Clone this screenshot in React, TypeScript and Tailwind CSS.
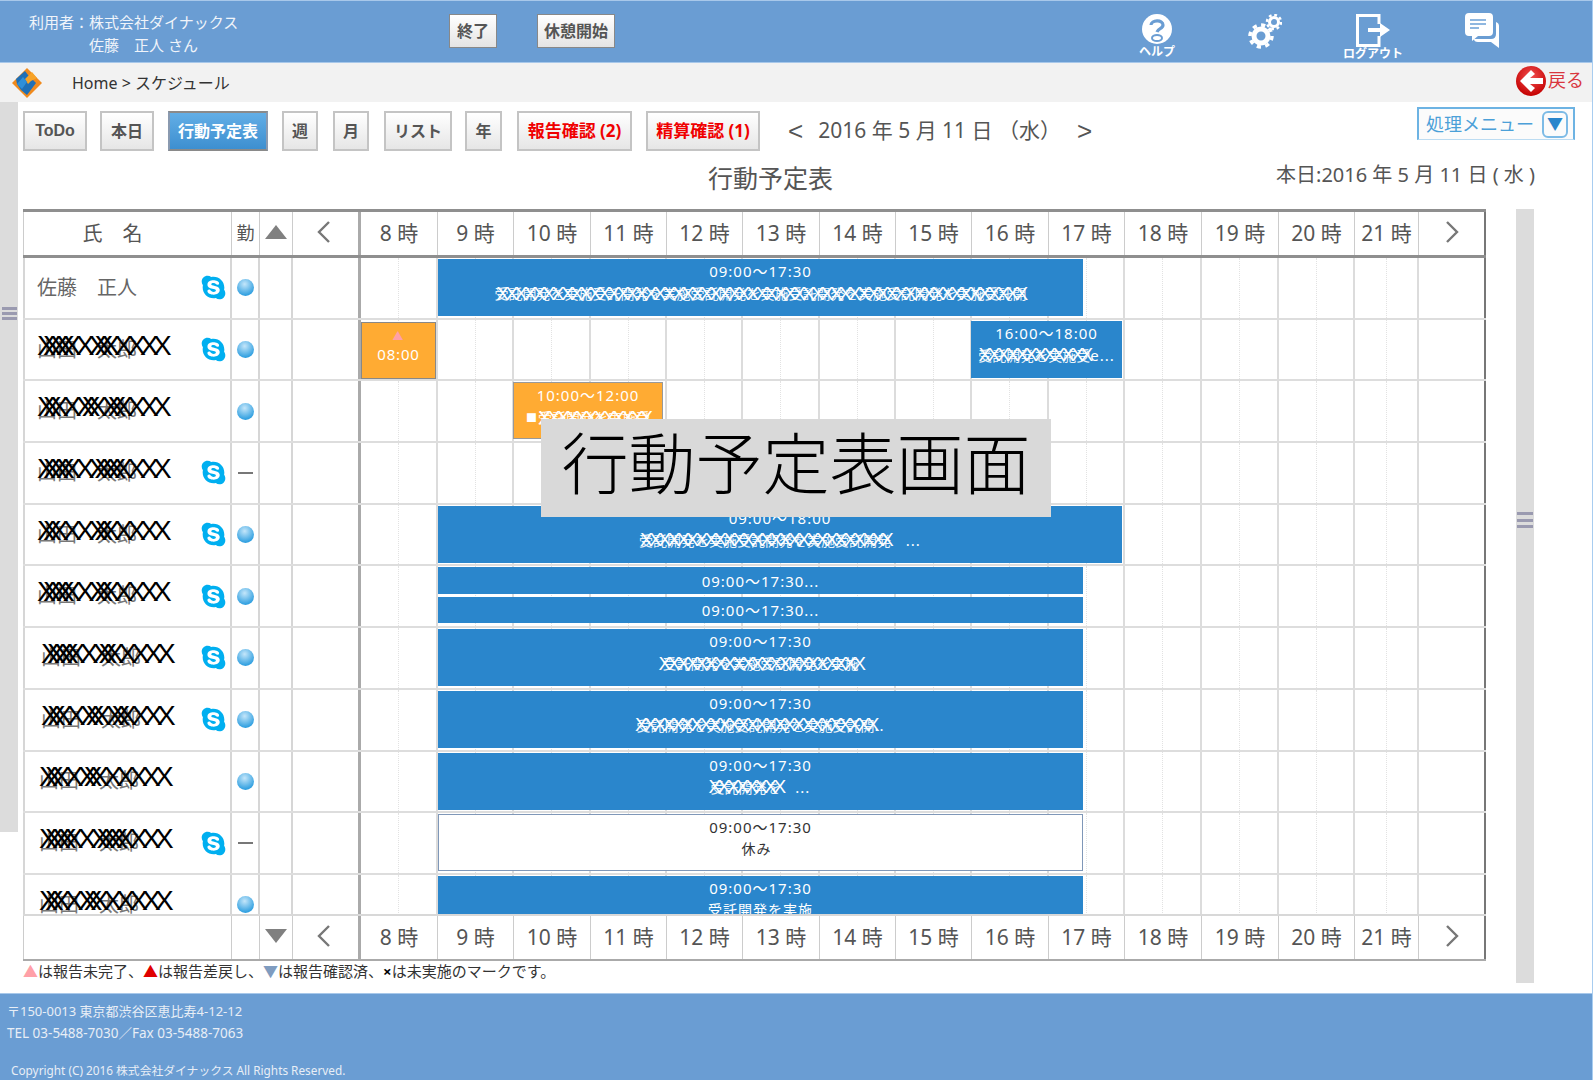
import type { ReactNode } from "react"
import { FaSkype } from "react-icons/fa"

const COLS =
  "grid grid-cols-[209px_28px_33px_68px_77px_76px_77px_76px_76px_77px_76px_76px_77px_76px_77px_77px_76px_64px_67px]"

const hours = [8, 9, 10, 11, 12, 13, 14, 15, 16, 17, 18, 19, 20, 21]

function Chevron({ left }: { left?: boolean }) {
  return (
    <svg width="18" height="24" viewBox="0 0 18 24" fill="none" stroke="#777" strokeWidth="2.4">
      <polyline points={left ? "14,2 4,12 14,22" : "4,2 14,12 4,22"} />
    </svg>
  )
}

function Tri({ down }: { down?: boolean }) {
  return (
    <svg width="24" height="14" viewBox="0 0 24 14" fill="#808080">
      <polygon points={down ? "1,0 23,0 12,14" : "12,0 23,14 1,14"} />
    </svg>
  )
}

function HeadRow({ bottom }: { bottom?: boolean }) {
  return (
    <div className={COLS + (bottom ? " h-[47px] border-b-2 border-t-2 border-t-[#d8d8d8] border-b-[#aaaaaa]" : " h-[49px] border-t-[3px] border-b-[3px] border-[#8f8f8f]")}>
      <div className="flex items-center justify-center border-x border-[#cccccc] pr-[30px] text-[20px] text-[#555]">
        {bottom ? "" : "氏　名"}
      </div>
      <div className="flex items-center justify-center border-r border-[#cccccc] text-[18px] text-[#555]">
        {bottom ? "" : "勤"}
      </div>
      <div className="flex items-center justify-center border-r border-[#cccccc] pb-1">
        <Tri down={bottom} />
      </div>
      <div className="flex items-center justify-center border-r-[3px] border-[#aaaaaa] pb-1 pr-1">
        <Chevron left />
      </div>
      {hours.map((h) => (
        <div
          key={h}
          className="flex items-center justify-center whitespace-nowrap border-r border-[#cccccc] text-[21px] text-[#555]"
        >
          {h} 時
        </div>
      ))}
      <div className="flex items-center justify-center border-r-2 border-[#777] pb-1">
        <Chevron />
      </div>
    </div>
  )
}

function MaskedName({ pad, extra }: { pad: string; extra: string }) {
  return (
    <div className={pad}>
      <div className="relative text-[20px] leading-none text-[#777]">
        <span>山田　太郎</span>
        <span className="absolute -top-[12px] left-0 whitespace-pre text-[28px] leading-[36px] tracking-[-5.8px] text-black [font-family:'Liberation_Sans']">
          XXXXXXXXXX
        </span>
        <span className="absolute -top-[12px] left-[6px] whitespace-pre text-[28px] leading-[36px] tracking-[-5.8px] text-black [font-family:'Liberation_Sans']">
          {extra.split("").map((c, i) => (
            <span key={i} className={c === "_" ? "invisible" : ""}>
              X
            </span>
          ))}
        </span>
      </div>
    </div>
  )
}

function Masked({ n, len, tail }: { n: number; len: number; tail?: string }) {
  return (
    <div className="flex items-center whitespace-nowrap">
      <div className="relative">
        <span className="text-[14px] tracking-normal opacity-90">{"受託開発を実施".repeat(6).slice(0, len)}</span>
        <span className="absolute inset-0 flex items-center justify-center whitespace-pre text-[19px] tracking-[-3.4px] [font-family:'Liberation_Sans']">
          {"X".repeat(n)}
        </span>
      </div>
      {tail && <span className="whitespace-pre">{tail}</span>}
    </div>
  )
}

function Bar({ className, children }: { className: string; children: ReactNode }) {
  return (
    <div
      className={
        "absolute flex flex-col items-center overflow-hidden bg-[#2a86cc] pt-px text-[15px] leading-[22px] tracking-[1px] text-white " +
        className
      }
    >
      {children}
    </div>
  )
}

const T = "09:00～17:30"

const rows: { pad: string; extra: string; skype: boolean; dash?: boolean; bars: ReactNode }[] = [
  {
    pad: "pl-[12px]",
    extra: "",
    skype: true,
    bars: (
      <Bar className="left-[415px] top-px h-[57px] w-[645px]">
        {T}
        <Masked n={57} len={38} />
      </Bar>
    ),
  },
  {
    pad: "pl-[12px]",
    extra: "XX__X",
    skype: true,
    bars: (
      <>
        <div className="absolute left-[338px] top-[2px] flex h-[57px] w-[75px] flex-col items-center border border-[#888] bg-[#ffab33] pt-[6px] text-[15px] tracking-[0.8px] text-white">
          <span className="text-[11px] leading-[14px] text-[#ffa0a8]">▲</span>
          <span className="mt-[1px] leading-[20px]">08:00</span>
        </div>
        <Bar className="left-[948px] top-px h-[57px] w-[151px]">
          16:00～18:00
          <Masked n={12} len={8} tail="e..." />
        </Bar>
      </>
    ),
  },
  {
    pad: "pl-[12px]",
    extra: "X__X_X",
    skype: false,
    bars: (
      <Bar className="left-[490px] top-px h-[57px] w-[150px] border border-[#999] !bg-[#ffab33]">
        10:00～12:00
        <div className="flex items-center">
          <span className="text-[11px]">■</span>
          <Masked n={12} len={8} />
        </div>
      </Bar>
    ),
  },
  { pad: "pl-[12px]", extra: "XX__XX", skype: true, dash: true, bars: null },
  {
    pad: "pl-[12px]",
    extra: "X___X",
    skype: true,
    bars: (
      <Bar className="left-[415px] top-[1px] h-[57px] w-[684px]">
        09:00～18:00
        <Masked n={27} len={18} tail="   ..." />
      </Bar>
    ),
  },
  {
    pad: "pl-[12px]",
    extra: "XX__X",
    skype: true,
    bars: (
      <>
        <Bar className="left-[415px] top-px h-[27px] w-[645px] justify-center !pt-0">09:00～17:30...</Bar>
        <Bar className="left-[415px] top-[31px] h-[26px] w-[645px] justify-center !pt-0">09:00～17:30...</Bar>
      </>
    ),
  },
  {
    pad: "pl-[16px]",
    extra: "XX__X",
    skype: true,
    bars: (
      <Bar className="left-[415px] top-px h-[57px] w-[645px]">
        {T}
        <Masked n={22} len={14} />
      </Bar>
    ),
  },
  {
    pad: "pl-[16px]",
    extra: "X__X_X",
    skype: true,
    bars: (
      <Bar className="left-[415px] top-px h-[57px] w-[645px]">
        {T}
        <Masked n={26} len={17} tail=".." />
      </Bar>
    ),
  },
  {
    pad: "pl-[14px]",
    extra: "X__X",
    skype: false,
    bars: (
      <Bar className="left-[415px] top-px h-[57px] w-[645px]">
        {T}
        <Masked n={8} len={5} tail="   ..." />
      </Bar>
    ),
  },
  {
    pad: "pl-[14px]",
    extra: "XX__XX",
    skype: true,
    dash: true,
    bars: (
      <Bar className="left-[415px] top-px h-[57px] w-[645px] border border-[#7f97b8] !bg-white !text-[#333]">
        {T}
        <span className="pr-2 text-[14px]">休み</span>
      </Bar>
    ),
  },
  {
    pad: "pl-[14px]",
    extra: "X__X",
    skype: false,
    bars: (
      <Bar className="left-[415px] top-px h-[57px] w-[645px]">
        {T}
        <span className="text-[14px]">受託開発を実施</span>
      </Bar>
    ),
  },
]

function BodyRow({ row, first }: { row: (typeof rows)[number]; first: boolean }) {
  return (
    <div className={COLS + " relative h-[61.7px] border-b-2 border-[#dddddd]"}>
      <div className="flex items-center justify-between border-x-2 border-[#d6d6d6] pr-[3px]">
        {first ? (
          <span className="pl-[12px] text-[20px] text-[#666]">佐藤　正人</span>
        ) : (
          <MaskedName pad={row.pad} extra={row.extra} />
        )}
        {row.skype && <FaSkype className="text-[27px] text-[#00aff0]" />}
      </div>
      <div className="flex items-center justify-center border-r-2 border-[#d6d6d6]">
        {row.dash ? (
          <div className="h-[2px] w-[15px] bg-[#777]" />
        ) : (
          <div className="h-[17px] w-[17px] rounded-full bg-[radial-gradient(circle_at_45%_30%,#c4e6fa,#2f9fe0_75%)]" />
        )}
      </div>
      <div className="border-r-2 border-[#d6d6d6]" />
      <div className="border-r-[3px] border-[#aaaaaa]" />
      {hours.map((h) => (
        <div key={h} className="flex justify-center border-r-2 border-[#dcdcdc]">
          <div className="h-full border-l border-dotted border-[#e2e2e2]" />
        </div>
      ))}
      <div className="border-r-2 border-[#777]" />
      {row.bars}
    </div>
  )
}

function TabButton({ label, className }: { label: string; className: string }) {
  return (
    <button
      className={
        "flex h-10 items-center justify-center border-2 border-[#c4c4c4] bg-gradient-to-b from-white to-[#e6e6e6] text-[16px] font-bold text-[#555] " +
        className
      }
    >
      {label}
    </button>
  )
}

function Logo() {
  return (
    <svg width="30" height="30" viewBox="0 0 30 30">
      <polygon points="15,0 30,15 15,30 0,15" fill="#f08a1d" />
      <polygon points="4,11 13,3 16,7 24,15 15,27 9,22 5,16" fill="#1f6fb5" />
      <polygon points="13,11 20,4 25,10 19,13 16,16" fill="#f7a328" />
      <polygon points="5,16 11,9 15,14 10,21" fill="#2f8fd8" />
    </svg>
  )
}

function HelpIcon() {
  return (
    <svg width="32" height="31" viewBox="0 0 32 31">
      <circle cx="16" cy="15" r="15" fill="#fff" />
      <path d="M10 11 C10 6 22 5 22 11 C22 15 17 14 16 18" fill="none" stroke="#6a9dd3" strokeWidth="3.2" />
      <ellipse cx="16" cy="24" rx="5" ry="3" fill="none" stroke="#6a9dd3" strokeWidth="2" />
    </svg>
  )
}

function GearIcon() {
  return (
    <svg width="34" height="35" viewBox="0 0 34 35" fill="none" stroke="#fff">
      <circle cx="13" cy="22" r="7" strokeWidth="5" />
      <circle cx="13" cy="22" r="11" strokeWidth="3.5" strokeDasharray="4.2 4.4" />
      <circle cx="26" cy="8" r="4.5" strokeWidth="3" />
      <circle cx="26" cy="8" r="7" strokeWidth="2.5" strokeDasharray="2.8 2.7" />
    </svg>
  )
}

function LogoutIcon() {
  return (
    <svg width="34" height="33" viewBox="0 0 34 33">
      <path d="M23 10 V1.5 H1.5 V31.5 H23 V22" fill="none" stroke="#fff" strokeWidth="3" />
      <polygon points="12,14 24,14 24,9 34,16 24,23 24,18 12,18" fill="#fff" />
    </svg>
  )
}

function ChatIcon() {
  return (
    <svg width="34" height="35" viewBox="0 0 34 35">
      <path d="M4 0 H24 Q28 0 28 4 V19 Q28 23 24 23 H13 L7 28 L7 23 H4 Q0 23 0 19 V4 Q0 0 4 0 Z" fill="#fff" />
      <path d="M5 7 H21 M5 11 H21 M5 15 H14" stroke="#8fb7e0" strokeWidth="2" />
      <path d="M31 9 Q34 10 34 13 V35 L26 29 H13 Q9 29 9 26 H26 Q31 26 31 21 Z" fill="#fff" />
    </svg>
  )
}

function BackIcon() {
  return (
    <svg width="30" height="30" viewBox="0 0 30 30">
      <defs>
        <radialGradient id="back" cx="50%" cy="35%" r="65%">
          <stop offset="0%" stopColor="#f25050" />
          <stop offset="100%" stopColor="#c40000" />
        </radialGradient>
      </defs>
      <circle cx="15" cy="15" r="15" fill="url(#back)" />
      <polygon points="4,15 15,4 19,8 14,12 27,12 27,18 14,18 19,22 15,26" fill="#fff" />
    </svg>
  )
}

export default function App() {
  return (
    <div className="relative flex h-[1080px] w-[1593px] flex-col overflow-hidden border-r border-[#a8cdf0] bg-white text-[#555] [font-family:'Noto_Sans','Noto_Sans_CJK_JP',sans-serif]">
      {/* top bar */}
      <header className="flex h-[63px] flex-none items-center border-y border-[#a8c8ea] bg-[#6a9dd3] text-white">
        <div className="ml-[29px] w-[420px] pt-[5px] text-[15px] leading-[23px] text-[#f0f4fa]">
          <div>利用者：株式会社ダイナックス</div>
          <div className="pl-[60px]">佐藤　正人 さん</div>
        </div>
        <button className="mb-[2px] flex h-[34px] w-[48px] items-center justify-center border border-[#888] bg-gradient-to-b from-white to-[#e4e4e4] text-[16px] font-bold text-[#555]">
          終了
        </button>
        <button className="mb-[2px] ml-[40px] flex h-[34px] w-[78px] items-center justify-center border border-[#888] bg-gradient-to-b from-white to-[#e4e4e4] text-[16px] font-bold text-[#555]">
          休憩開始
        </button>
        <div className="ml-[524px] flex w-[36px] flex-col items-center pt-[10px] text-[12px] font-bold leading-[14px]">
          <HelpIcon />
          <span className="whitespace-nowrap">ヘルプ</span>
        </div>
        <div className="ml-[73px] flex w-[34px] flex-col items-center">
          <GearIcon />
        </div>
        <div className="ml-[61px] flex w-[60px] flex-col items-center pt-[12px] text-[12px] font-bold leading-[14px]">
          <LogoutIcon />
          <span className="whitespace-nowrap">ログアウト</span>
        </div>
        <div className="ml-[62px] flex w-[34px] flex-col items-center pb-[2px]">
          <ChatIcon />
        </div>
      </header>

      {/* breadcrumb */}
      <div className="flex h-[39px] flex-none items-center bg-[#f2f2f2]">
        <div className="ml-[12px]">
          <Logo />
        </div>
        <div className="ml-[30px] text-[16px] text-[#333]">Home &gt; スケジュール</div>
        <div className="ml-auto mr-[8px] flex items-center gap-[2px] pb-[4px]">
          <BackIcon />
          <span className="text-[18px] text-[#d9363e]">戻る</span>
        </div>
      </div>

      {/* main */}
      <main className="flex h-[891px] flex-none">
        <div className="flex h-[730px] w-[18px] flex-none flex-col items-center gap-[2.5px] bg-[#dcdcdc] pt-[205px]">
          <div className="h-[2.5px] w-[15px] bg-[#9a9ab0]" />
          <div className="h-[2.5px] w-[15px] bg-[#9a9ab0]" />
          <div className="h-[2.5px] w-[15px] bg-[#9a9ab0]" />
        </div>
        <div className="min-w-0 flex-1 pl-[5px]">
          {/* toolbar */}
          <div className="relative flex h-[49px] items-start pt-[9px]">
            <TabButton label="ToDo" className="w-[64px] [font-family:'Liberation_Sans']" />
            <TabButton label="本日" className="ml-[13px] w-[54px]" />
            <button className="ml-[14px] flex h-10 w-[100px] items-center justify-center border-2 border-[#8a8a8a] border-x-[#8a9ab0] bg-gradient-to-b from-[#62aee6] to-[#3d8fd0] text-[16px] font-bold text-white">
              行動予定表
            </button>
            <TabButton label="週" className="ml-[14px] w-[36px]" />
            <TabButton label="月" className="ml-[15px] w-[36px]" />
            <TabButton label="リスト" className="ml-[15px] w-[68px]" />
            <TabButton label="年" className="ml-[13px] w-[37px]" />
            <TabButton label="報告確認 (2)" className="ml-[15px] w-[115px] !text-[17px] !text-[#f00000]" />
            <TabButton label="精算確認 (1)" className="ml-[14px] w-[114px] !text-[17px] !text-[#f00000]" />
            <div className="ml-[28px] flex h-10 items-center text-[21px] text-[#555]">
              <span className="mr-[15px] text-[26px] [font-family:'Liberation_Sans']">&lt;</span>
              <span className="whitespace-nowrap">2016 年 5 月 11 日 （水）</span>
              <span className="ml-[16px] text-[26px] [font-family:'Liberation_Sans']">&gt;</span>
            </div>
            <button className="absolute left-[1394px] top-[5px] flex h-[33px] w-[158px] items-center justify-between border-2 border-b border-[#6db3e3] border-b-[#bcdcf2] bg-[#fbfbfb] pl-[7px] pr-[5px] text-[18px] text-[#4ba0d8]">
              処理メニュー
              <span className="flex h-[27px] w-[26px] items-center justify-center rounded-md border-2 border-[#7dbbe6] text-[16px] leading-none text-[#2a86cc]">
                ▼
              </span>
            </button>
          </div>

          {/* title */}
          <div className="flex h-[58px] items-center">
            <h1 className="mb-[3px] ml-[685px] text-[25px] font-normal text-[#555]">行動予定表</h1>
            <div className="mb-[10px] ml-[443px] whitespace-nowrap text-[20px] text-[#555]">本日:2016 年 5 月 11 日 ( 水 )</div>
          </div>

          <div className="flex items-start">
            <div className="w-[1463px] flex-none">
              <HeadRow />
              <div className="h-[656px] overflow-hidden">
                {rows.map((r, i) => (
                  <BodyRow key={i} row={r} first={i === 0} />
                ))}
              </div>
              <HeadRow bottom />
              <div className="flex h-[20px] items-center text-[15px] text-[#333]">
                <span className="text-[#ffa0a8]">▲</span>は報告未完了、
                <span className="text-[#e00000]">▲</span>は報告差戻し、
                <span className="text-[#7f9cc0]">▼</span>は報告確認済、
                <span className="font-bold text-black">×</span>は未実施のマークです。
              </div>
            </div>
            <div className="ml-[30px] flex h-[774px] w-[18px] flex-none flex-col items-center gap-[3.5px] bg-[#dcdcdc] pt-[303px]">
              <div className="h-[3px] w-[16px] bg-[#9a9ab0]" />
              <div className="h-[3px] w-[16px] bg-[#9a9ab0]" />
              <div className="h-[3px] w-[16px] bg-[#9a9ab0]" />
            </div>
          </div>
        </div>
      </main>

      {/* footer */}
      <footer className="h-[87px] flex-none border-t border-[#a8c8ea] bg-[#6a9dd3] pl-[7px] pt-[6px] text-[13.5px] leading-[22px] text-[#e8eef6]">
        <div className="text-[13px]">〒150-0013 東京都渋谷区恵比寿4-12-12</div>
        <div>TEL 03-5488-7030／Fax 03-5488-7063</div>
        <div className="mt-[15px] pl-[4px] text-[11.8px]">Copyright (C) 2016 株式会社ダイナックス All Rights Reserved.</div>
      </footer>

      {/* caption pasted over the schedule */}
      <div className="absolute left-[541px] top-[419px] flex h-[98px] w-[510px] items-center justify-center whitespace-nowrap bg-[#d9d9d9] pb-[10px] text-[67px] font-light text-black">
        行動予定表画面
      </div>
    </div>
  )
}
